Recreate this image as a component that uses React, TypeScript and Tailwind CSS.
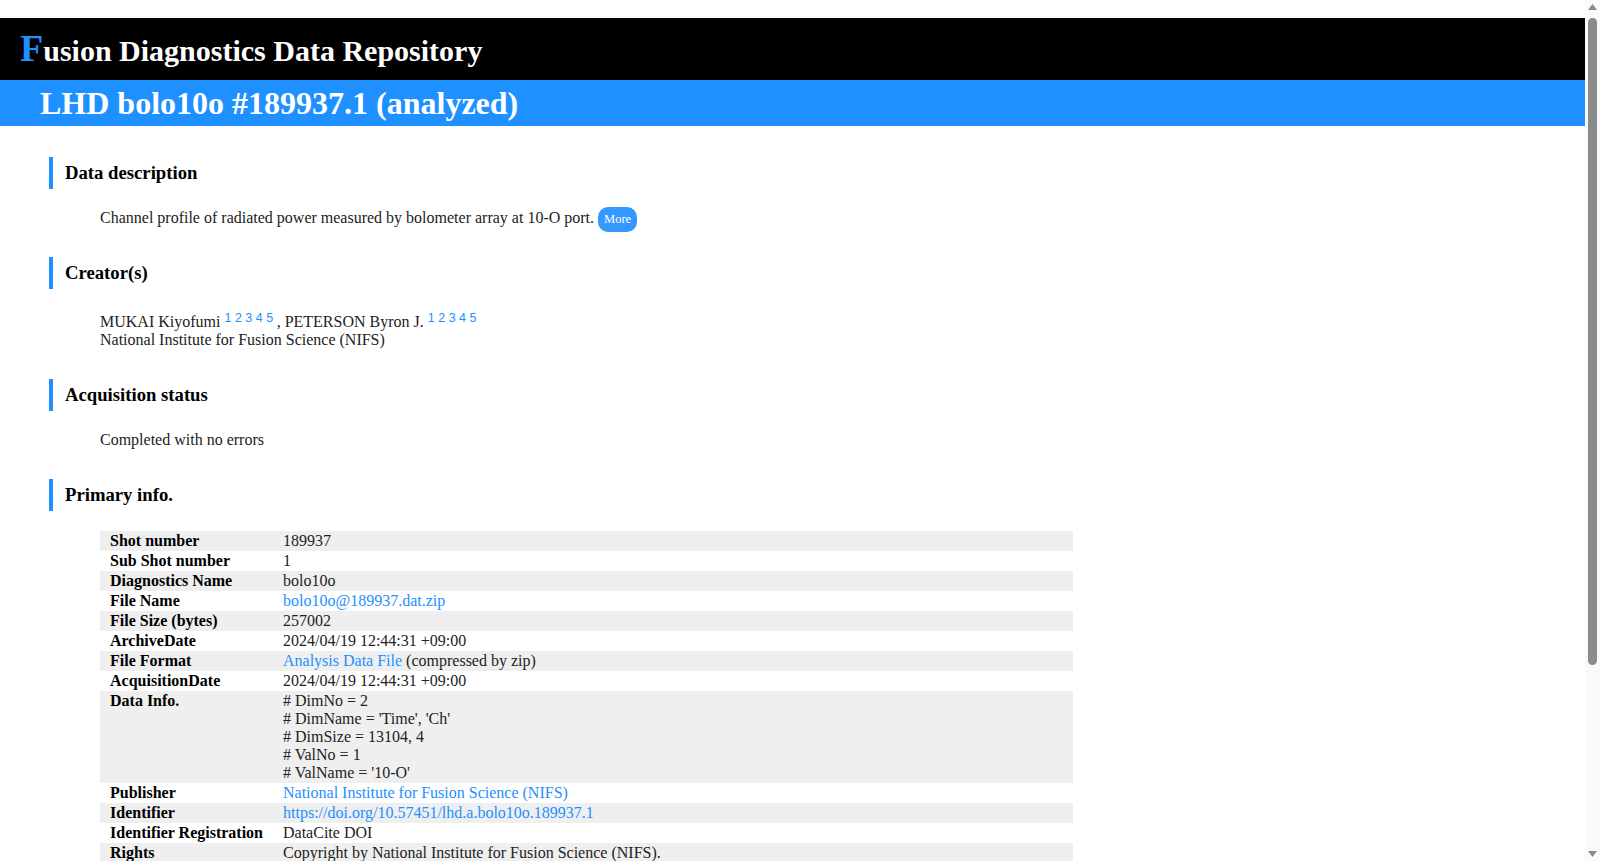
import type { ReactNode } from 'react'

const BLUE = 'text-[#1e90ff]'

type Row = { label: string; value: ReactNode }

const ROWS: Row[] = [
  { label: 'Shot number', value: '189937' },
  { label: 'Sub Shot number', value: '1' },
  { label: 'Diagnostics Name', value: 'bolo10o' },
  { label: 'File Name', value: <a className={BLUE} href="#">bolo10o@189937.dat.zip</a> },
  { label: 'File Size (bytes)', value: '257002' },
  { label: 'ArchiveDate', value: '2024/04/19 12:44:31 +09:00' },
  {
    label: 'File Format',
    value: (
      <>
        <a className={BLUE} href="#">Analysis Data File</a> (compressed by zip)
      </>
    ),
  },
  { label: 'AcquisitionDate', value: '2024/04/19 12:44:31 +09:00' },
  {
    label: 'Data Info.',
    value: (
      <>
        <div># DimNo = 2</div>
        <div># DimName = 'Time', 'Ch'</div>
        <div># DimSize = 13104, 4</div>
        <div># ValNo = 1</div>
        <div># ValName = '10-O'</div>
      </>
    ),
  },
  { label: 'Publisher', value: <a className={BLUE} href="#">National Institute for Fusion Science (NIFS)</a> },
  { label: 'Identifier', value: <a className={BLUE} href="#">https://doi.org/10.57451/lhd.a.bolo10o.189937.1</a> },
  { label: 'Identifier Registration', value: 'DataCite DOI' },
  { label: 'Rights', value: 'Copyright by National Institute for Fusion Science (NIFS).' },
  { label: 'Language', value: 'en' },
  { label: 'Version', value: '1' },
  { label: 'Subject', value: 'Plasma physics, Bolometry' },
]

function SectionTitle({ children, top }: { children: ReactNode; top: string }) {
  return (
    <h2 className={`${top} ml-[49px] h-[32px] border-l-4 border-[#1e90ff] pl-[12px] flex items-center text-[18.7px] font-bold text-black`}>
      {children}
    </h2>
  )
}

// author reference numbers, raised above the line
function Refs() {
  return (
    <span className="relative -top-[5px] font-['Liberation_Sans',Arial,sans-serif] text-[12.5px] leading-none">
      {[1, 2, 3, 4, 5].map(n => (
        <span key={n}>
          <a href="#" className={BLUE}>{n}</a>{' '}
        </span>
      ))}
    </span>
  )
}

// classic desktop scrollbar along the right edge of the window
function Scrollbar() {
  return (
    <div className="fixed right-0 top-0 h-[861px] w-[15px] bg-[#fafafa]">
      <svg className="absolute left-[3px] top-[4px]" width="9" height="7" viewBox="0 0 9 7">
        <path d="M4.5 0 L9 6 L0 6 Z" fill="#8a8a8a" />
      </svg>
      <div className="absolute left-[3px] top-[18px] h-[647px] w-[9px] rounded-full bg-[#8b8b8b]" />
      <svg className="absolute left-[3px] bottom-[4px]" width="9" height="7" viewBox="0 0 9 7">
        <path d="M0 1 L9 1 L4.5 7 Z" fill="#8a8a8a" />
      </svg>
    </div>
  )
}

export default function App() {
  return (
    <div className="min-h-[1127px] w-[1585px] bg-white font-['Liberation_Serif','Times_New_Roman',serif] text-[16px] leading-[18px] text-[#222] pb-[40px]">
      <header className="mt-[18px] h-[62px] bg-black pl-[20px] flex items-end pb-[13px]">
        <h1 className="font-bold text-white text-[30px] leading-none">
          <span className="text-[#1e90ff] text-[38px]">F</span>usion Diagnostics Data Repository
        </h1>
      </header>
      <div className="h-[46px] bg-[#1e90ff] pl-[40px] flex items-center">
        <div className="font-bold text-white text-[32px] leading-none">LHD bolo10o #189937.1 (analyzed)</div>
      </div>

      <SectionTitle top="mt-[31px]">Data description</SectionTitle>
      <div className="ml-[100px] mt-[18px] h-[25px] flex items-center gap-[4px]">
        <span className="mb-[3px]">Channel profile of radiated power measured by bolometer array at 10-O port.</span>
        <button className="h-[25px] px-[6px] rounded-[10px] bg-[#3399ff] text-white text-[12.5px] leading-none">More</button>
      </div>

      <SectionTitle top="mt-[25px]">Creator(s)</SectionTitle>
      <div className="ml-[100px] mt-[24px]">
        <div>
          MUKAI Kiyofumi <Refs />, PETERSON Byron J. <Refs />
        </div>
        <div>National Institute for Fusion Science (NIFS)</div>
      </div>

      <SectionTitle top="mt-[30px]">Acquisition status</SectionTitle>
      <div className="ml-[100px] mt-[20px]">Completed with no errors</div>

      <SectionTitle top="mt-[30px]">Primary info.</SectionTitle>
      <table className="ml-[100px] mt-[20px] w-[973px] border-collapse">
        <tbody>
          {ROWS.map((r, i) => (
            <tr key={r.label} className={i % 2 === 0 ? 'bg-[#efefef]' : 'bg-white'}>
              <th className="w-[173px] px-[10px] py-px text-left align-top font-bold text-black whitespace-nowrap">{r.label}</th>
              <td className="px-[10px] py-px align-top">{r.value}</td>
            </tr>
          ))}
        </tbody>
      </table>
      <Scrollbar />
    </div>
  )
}
